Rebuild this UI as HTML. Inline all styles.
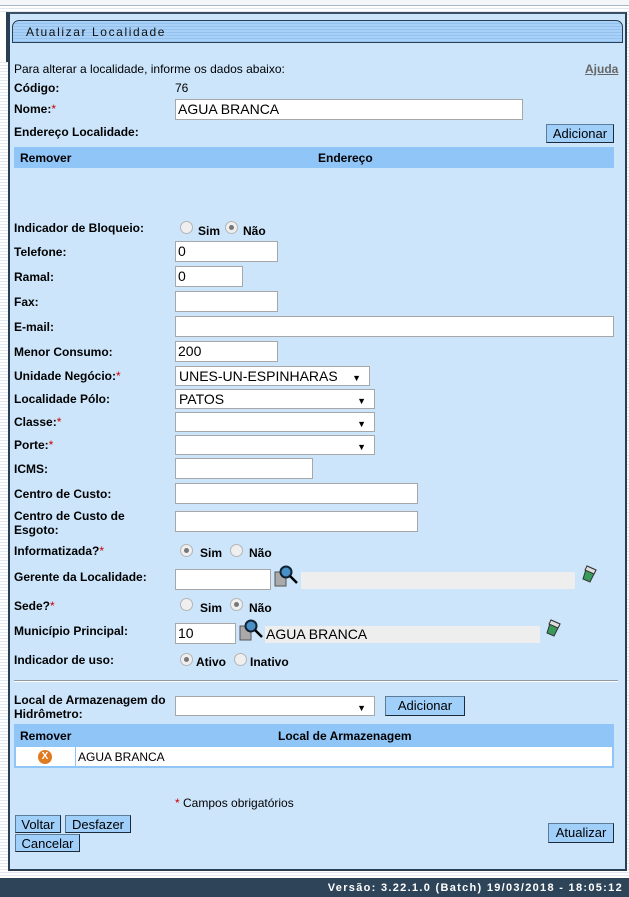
<!DOCTYPE html>
<html><head><meta charset="utf-8"><style>
*{box-sizing:border-box;margin:0;padding:0}
body{width:629px;height:897px;position:relative;overflow:hidden;font-family:"Liberation Sans",Arial,sans-serif;font-size:12px;color:#000;background:repeating-linear-gradient(#fff 0 2px,#dfe8f3 2px 3px)}
.a{position:absolute}
#panel{left:8px;top:12px;width:619px;height:859px;background:#cce5fb;border:2px solid #2b3f54;border-top-color:#3c4f63}
#title{left:12px;top:20px;width:611px;height:23px;border:1px solid #2b3f54;border-radius:7px 7px 0 0;background:repeating-linear-gradient(#a9d1f7 0 2px,#93c2ee 2px 3px);font-size:12px;letter-spacing:1.6px;color:#111;padding:4px 0 0 13px}
.l{position:absolute;left:14px;font-weight:bold;line-height:14px;margin-top:1px}
.r{color:#c00;font-weight:normal}
.i{position:absolute;background:#fff;border:1px solid #a7a7a7;height:21px;font-size:14px;padding:2px 2px;line-height:15px}
.s{position:absolute;background:#fff;border:1px solid #a7a7a7;height:20px;font-size:14px;padding:1px 3px;line-height:16px}
.s:after{content:"▼";position:absolute;right:8px;top:3px;font-size:9px}
.b{position:absolute;background:#a0cffa;border:1px solid #5d7c99;border-right-color:#1d2a38;border-bottom-color:#1d2a38;font-size:13px;line-height:17px;text-align:center}
.rad{position:absolute;width:13px;height:13px;border-radius:50%;border:1px solid #b5b5b5;background:#efefef}
.rad.on:after{content:"";position:absolute;left:3px;top:3px;width:5px;height:5px;border-radius:50%;background:#777}
.rt{position:absolute;font-weight:bold;line-height:14px;margin-top:1px}
.th{position:absolute;background:#90c5f7;font-weight:bold;line-height:14px}
.g{position:absolute;background:#eeeeee}
</style></head><body>
<div class="a" style="left:0;top:0;width:629px;height:6px;background:#f4f6f9;border-bottom:1px solid #a9b6c4"></div>
<div class="a" style="left:0;top:12px;width:8px;height:50px;border-right:2px solid #2b3f54;background:#fff"></div>
<div class="a" id="panel"></div>
<div class="a" id="title">Atualizar Localidade</div>

<div class="a" style="left:14px;top:62px;line-height:14px">Para alterar a localidade, informe os dados abaixo:</div>
<div class="a" style="left:585px;top:62px;font-weight:bold;color:#666;text-decoration:underline">Ajuda</div>
<div class="l" style="top:80px">Código:</div><div class="a" style="left:175px;top:81px">76</div>
<div class="l" style="top:101px">Nome:<span class="r">*</span></div>
<div class="i" style="left:175px;top:99px;width:348px">AGUA BRANCA</div>
<div class="l" style="top:124px">Endereço Localidade:</div>
<div class="b" style="left:546px;top:124px;width:68px;height:19px">Adicionar</div>
<div class="th" style="left:14px;top:147px;width:600px;height:21px;padding:4px 6px">Remover<span style="position:absolute;left:304px">Endereço</span></div>

<div class="l" style="top:220px">Indicador de Bloqueio:</div>
<div class="rad" style="left:180px;top:221px"></div><div class="rt" style="left:198px;top:223px">Sim</div>
<div class="rad on" style="left:225px;top:221px"></div><div class="rt" style="left:243px;top:223px">Não</div>
<div class="l" style="top:244px">Telefone:</div><div class="i" style="left:175px;top:241px;width:103px">0</div>
<div class="l" style="top:269px">Ramal:</div><div class="i" style="left:175px;top:266px;width:68px">0</div>
<div class="l" style="top:294px">Fax:</div><div class="i" style="left:175px;top:291px;width:103px"></div>
<div class="l" style="top:319px">E-mail:</div><div class="i" style="left:175px;top:316px;width:439px"></div>
<div class="l" style="top:344px">Menor Consumo:</div><div class="i" style="left:175px;top:341px;width:103px">200</div>
<div class="l" style="top:368px">Unidade Negócio:<span class="r">*</span></div><div class="s" style="left:175px;top:366px;width:195px">UNES-UN-ESPINHARAS</div>
<div class="l" style="top:391px">Localidade Pólo:</div><div class="s" style="left:175px;top:389px;width:200px">PATOS</div>
<div class="l" style="top:414px">Classe:<span class="r">*</span></div><div class="s" style="left:175px;top:412px;width:200px"></div>
<div class="l" style="top:437px">Porte:<span class="r">*</span></div><div class="s" style="left:175px;top:435px;width:200px"></div>
<div class="l" style="top:461px">ICMS:</div><div class="i" style="left:175px;top:458px;width:138px"></div>
<div class="l" style="top:486px">Centro de Custo:</div><div class="i" style="left:175px;top:483px;width:243px"></div>
<div class="l" style="top:508px">Centro de Custo de<br>Esgoto:</div><div class="i" style="left:175px;top:511px;width:243px"></div>
<div class="l" style="top:543px">Informatizada?<span class="r">*</span></div>
<div class="rad on" style="left:180px;top:544px"></div><div class="rt" style="left:200px;top:545px">Sim</div>
<div class="rad" style="left:230px;top:544px"></div><div class="rt" style="left:249px;top:545px">Não</div>
<div class="l" style="top:569px">Gerente da Localidade:</div>
<div class="i" style="left:175px;top:569px;width:96px"></div>
<svg class="a" style="left:273px;top:564px" width="26" height="26" viewBox="0 0 26 26"><rect x="2" y="8" width="11" height="14" fill="#aaa" stroke="#555"/><circle cx="13" cy="8" r="5.5" fill="#4a90c8" stroke="#123" stroke-width="2"/><path d="M17 12l7 7" stroke="#000" stroke-width="2.5"/></svg>
<div class="g" style="left:301px;top:572px;width:274px;height:17px"></div>
<svg class="a" style="left:580px;top:564px" width="18" height="20" viewBox="0 0 18 20"><path d="M7 2l9 4-6 12-7-3z" fill="#3a9a5a" stroke="#333"/><path d="M7 2l9 4-2 4-9-4z" fill="#ddd" stroke="#333"/></svg>
<div class="l" style="top:598px">Sede?<span class="r">*</span></div>
<div class="rad" style="left:180px;top:598px"></div><div class="rt" style="left:200px;top:600px">Sim</div>
<div class="rad on" style="left:230px;top:598px"></div><div class="rt" style="left:249px;top:600px">Não</div>
<div class="l" style="top:623px">Município Principal:</div>
<div class="i" style="left:175px;top:623px;width:61px">10</div>
<svg class="a" style="left:238px;top:618px" width="26" height="26" viewBox="0 0 26 26"><rect x="2" y="8" width="11" height="14" fill="#aaa" stroke="#555"/><circle cx="13" cy="8" r="5.5" fill="#4a90c8" stroke="#123" stroke-width="2"/><path d="M17 12l7 7" stroke="#000" stroke-width="2.5"/></svg>
<div class="g" style="left:265px;top:626px;width:275px;height:17px;font-size:14px;line-height:17px;padding-left:1px">AGUA BRANCA</div>
<svg class="a" style="left:544px;top:618px" width="18" height="20" viewBox="0 0 18 20"><path d="M7 2l9 4-6 12-7-3z" fill="#3a9a5a" stroke="#333"/><path d="M7 2l9 4-2 4-9-4z" fill="#ddd" stroke="#333"/></svg>
<div class="l" style="top:652px">Indicador de uso:</div>
<div class="rad on" style="left:180px;top:653px"></div><div class="rt" style="left:196px;top:654px">Ativo</div>
<div class="rad" style="left:234px;top:653px"></div><div class="rt" style="left:250px;top:654px">Inativo</div>

<div class="a" style="left:14px;top:680px;width:604px;height:2px;border-top:1px solid #8d9aa6;border-bottom:1px solid #fff"></div>
<div class="l" style="top:692px">Local de Armazenagem do<br>Hidrômetro:</div>
<div class="s" style="left:175px;top:696px;width:200px"></div>
<div class="b" style="left:385px;top:696px;width:80px;height:20px">Adicionar</div>
<div class="th" style="left:14px;top:724px;width:600px;height:23px;padding:5px 6px">Remover<span style="position:absolute;left:264px">Local de Armazenagem</span></div>
<div class="a" style="left:14px;top:747px;width:600px;height:21px;background:#fff;border:2px solid #90c5f7;border-top:0"></div>
<div class="a" style="left:75px;top:747px;width:1px;height:19px;background:#90c5f7"></div>
<div class="a" style="left:38px;top:750px;width:14px;height:14px;border-radius:50%;background:#e07a20;color:#fff;font-weight:bold;font-size:10px;line-height:14px;text-align:center">X</div>
<div class="a" style="left:78px;top:750px;font-size:12px;line-height:14px">AGUA BRANCA</div>
<div class="a" style="left:175px;top:796px;line-height:14px"><span class="r">*</span> Campos obrigatórios</div>
<div class="b" style="left:15px;top:815px;width:46px;height:18px">Voltar</div>
<div class="b" style="left:65px;top:815px;width:66px;height:18px">Desfazer</div>
<div class="b" style="left:15px;top:834px;width:65px;height:18px">Cancelar</div>
<div class="b" style="left:548px;top:823px;width:66px;height:20px">Atualizar</div>

<div class="a" style="left:0;top:878px;width:629px;height:19px;background:#2e4459;color:#fff;font-weight:bold;font-size:11px;letter-spacing:1.3px;text-align:right;padding:4px 6px 0 0">Versão: 3.22.1.0 (Batch) 19/03/2018 - 18:05:12</div>
</body></html>
